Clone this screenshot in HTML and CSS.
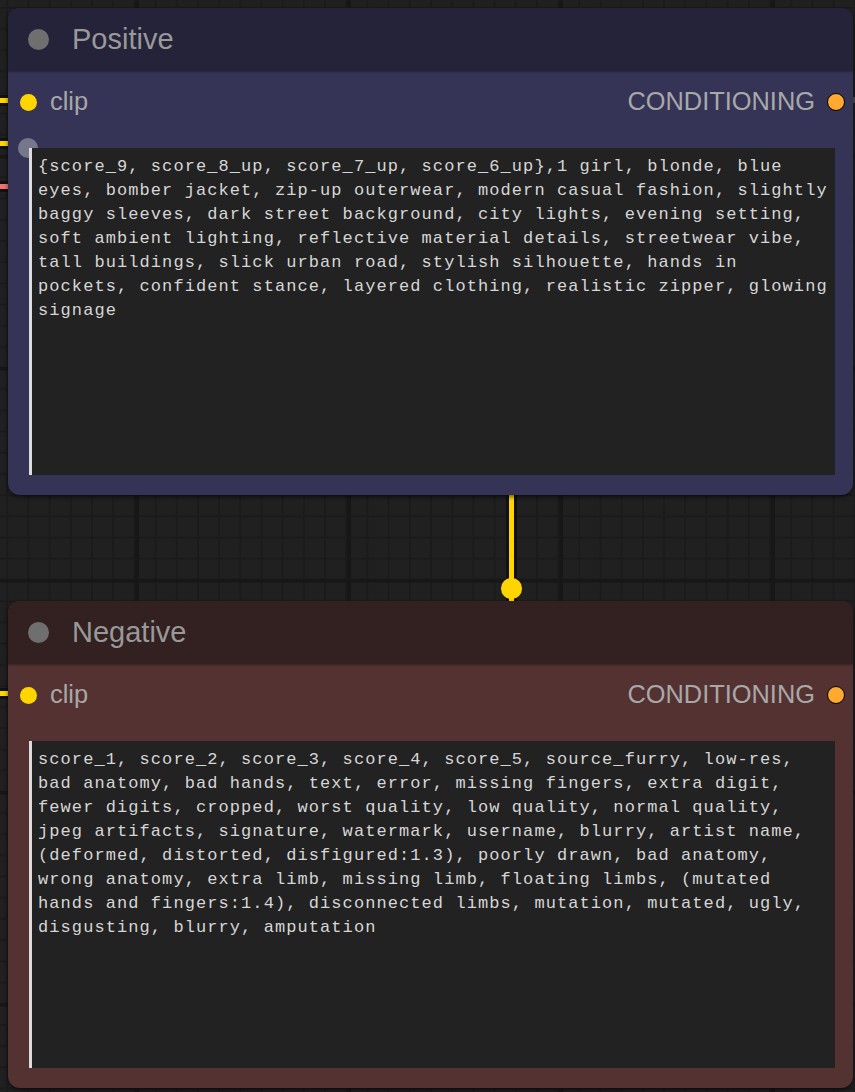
FILE: index.html
```html
<!DOCTYPE html>
<html lang="en">
<head>
<meta charset="utf-8">
<title>Positive / Negative prompt nodes</title>
<link rel="stylesheet" href="styles.css">
</head>
<body>
<div class="canvas">
  <span class="wire wire-clip-a"></span>
  <span class="wire wire-clip-b"></span>
  <span class="wire wire-red"></span>
  <span class="wire wire-clip-c"></span>
  <span class="wire-out"></span>

  <section class="node node-pos">
    <header class="node-title">
      <span class="title-dot"></span>
      <span class="title-text">Positive</span>
    </header>
    <div class="node-body">
      <div class="slots">
        <div class="slot slot-in">
          <span class="dot dot-clip"></span>
          <span class="slot-label">clip</span>
        </div>
        <div class="slot slot-out">
          <span class="slot-label">CONDITIONING</span>
          <span class="dot dot-cond"></span>
        </div>
      </div>
      <span class="widget-dot"></span>
      <textarea class="prompt" spellcheck="false" readonly>{score_9, score_8_up, score_7_up, score_6_up},1 girl, blonde, blue
eyes, bomber jacket, zip-up outerwear, modern casual fashion, slightly
baggy sleeves, dark street background, city lights, evening setting,
soft ambient lighting, reflective material details, streetwear vibe,
tall buildings, slick urban road, stylish silhouette, hands in
pockets, confident stance, layered clothing, realistic zipper, glowing
signage</textarea>
    </div>
  </section>

  <div class="link">
    <span class="link-line"></span>
    <span class="link-dot"></span>
  </div>

  <section class="node node-neg">
    <header class="node-title">
      <span class="title-dot"></span>
      <span class="title-text">Negative</span>
    </header>
    <div class="node-body">
      <div class="slots">
        <div class="slot slot-in">
          <span class="dot dot-clip"></span>
          <span class="slot-label">clip</span>
        </div>
        <div class="slot slot-out">
          <span class="slot-label">CONDITIONING</span>
          <span class="dot dot-cond"></span>
        </div>
      </div>
      <textarea class="prompt" spellcheck="false" readonly>score_1, score_2, score_3, score_4, score_5, source_furry, low-res,
bad anatomy, bad hands, text, error, missing fingers, extra digit,
fewer digits, cropped, worst quality, low quality, normal quality,
jpeg artifacts, signature, watermark, username, blurry, artist name,
(deformed, distorted, disfigured:1.3), poorly drawn, bad anatomy,
wrong anatomy, extra limb, missing limb, floating limbs, (mutated
hands and fingers:1.4), disconnected limbs, mutation, mutated, ugly,
disgusting, blurry, amputation</textarea>
    </div>
  </section>
</div>
</body>
</html>
```

FILE: styles.css
```css
html, body {
  margin: 0;
  padding: 0;
}

body {
  width: 855px;
  height: 1092px;
  overflow: hidden;
  background-color: #202020;
  background-image:
    linear-gradient(to right, #171717 0, #171717 4px, transparent 4px),
    linear-gradient(to bottom, #171717 0, #171717 4px, transparent 4px),
    linear-gradient(to right, #1b1b1b 0, #1b1b1b 2px, transparent 2px),
    linear-gradient(to bottom, #1b1b1b 0, #1b1b1b 2px, transparent 2px);
  background-size: 212px 212px, 212px 212px, 21.2px 21.2px, 21.2px 21.2px;
  background-position: 135px 0, 0 154.7px, 6.3px 0, 0 6.9px;
  font-family: "Liberation Sans", Arial, sans-serif;
}

.canvas {
  position: relative;
  display: flex;
  flex-direction: column;
  padding: 8px 0 0 8px;
}

/* wires entering from the left */
.wire {
  position: absolute;
  left: 0;
  width: 10px;
  height: 5px;
  background: #ffd500;
  box-shadow: 0 -3px 0 #111, 0 3px 0 #111;
}
.wire-clip-a { top: 98px; }
.wire-clip-b { top: 141px; }
.wire-red { top: 183.5px; background: #ef7272; }
.wire-clip-c { top: 691px; }

.wire-out {
  position: absolute;
  left: 852px;
  top: 97px;
  width: 3px;
  height: 6px;
  background: #4a4a4a;
}

.node {
  position: relative;
  z-index: 1;
  width: 845px;
  height: 487px;
  border-radius: 12px;
  display: flex;
  flex-direction: column;
  overflow: hidden;
  box-shadow: 0 2px 4px rgba(0, 0, 0, 0.55);
}

.node-pos { background: #353456; }
.node-pos .node-title { background: #24233a; }
.node-neg { background: #543232; }
.node-neg .node-title { background: #322120; }

.node-title {
  position: relative;
  z-index: 1;
  height: 63px;
  flex: none;
  display: flex;
  align-items: center;
  padding-left: 20px;
  box-shadow: 0 1px 2px rgba(0, 0, 0, 0.35);
}

.title-dot {
  width: 21px;
  height: 21px;
  border-radius: 50%;
  background: #6f6f6f;
  flex: none;
}

.title-text {
  margin-left: 23px;
  font-size: 29px;
  color: #999;
  line-height: 1;
  padding-bottom: 1px;
}

.node-body {
  position: relative;
  flex: 1;
  display: flex;
  flex-direction: column;
}

.slots {
  height: 62px;
  display: flex;
  align-items: center;
  justify-content: space-between;
  padding: 0 8px 0 12px;
}

.slot {
  display: flex;
  align-items: center;
}

.slot-label {
  font-size: 25.4px;
  color: #a8a8a8;
  line-height: 1;
}

.dot {
  display: block;
  border-radius: 50%;
  flex: none;
}

.dot-clip {
  width: 17px;
  height: 17px;
  background: #ffd500;
  margin-right: 13px;
}

.dot-cond {
  width: 16px;
  height: 16px;
  background: #ffa931;
  border: 1.5px solid #000;
  margin-left: 12px;
}

.widget-dot {
  position: absolute;
  left: 10px;
  top: 67px;
  width: 20px;
  height: 20px;
  border-radius: 50%;
  background: #77778b;
}

.prompt {
  position: relative;
  display: block;
  box-sizing: border-box;
  margin: 15px 18px 0 21px;
  width: 806px;
  height: 327px;
  padding: 7px 4px 0 6px;
  border: 0;
  border-left: 3px solid #dcdcdc;
  border-radius: 0;
  background: #222;
  color: #d6d6d6;
  font-family: "Liberation Mono", "DejaVu Sans Mono", monospace;
  font-size: 17px;
  letter-spacing: 1.08px;
  line-height: 24px;
  white-space: pre;
  overflow: hidden;
  resize: none;
  outline: none;
}

.link {
  position: relative;
  height: 106px;
  flex: none;
}

.link-line {
  position: absolute;
  left: 500.5px;
  top: 0;
  width: 5.5px;
  height: 106px;
  background: #ffd500;
  box-shadow: -3px 0 0 #111, 3px 0 0 #111;
}

.link-dot {
  position: absolute;
  left: 493px;
  top: 83px;
  width: 20.5px;
  height: 20.5px;
  border-radius: 50%;
  background: #ffd500;
}
```
